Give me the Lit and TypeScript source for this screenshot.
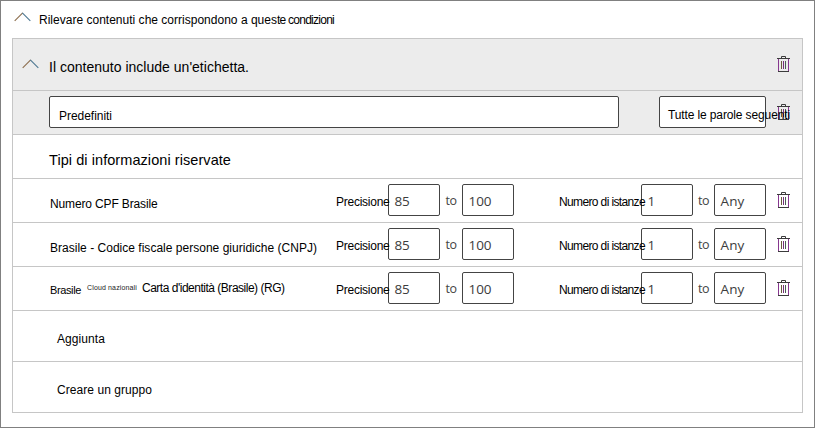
import { LitElement, html, css, svg } from "lit";
import { customElement, property } from "lit/decorators.js";

/** Text spread over a fixed width by adjusting its letter spacing. */
@customElement("fit-text")
class FitText extends LitElement {
  @property() text = "";
  @property({ type: Number }) width = 0;

  static styles = css`
    :host { display: inline-block; white-space: pre; flex: none; }
    span { display: inline-block; }
  `;

  firstUpdated() {
    const span = this.renderRoot.querySelector("span")!;
    const natural = span.getBoundingClientRect().width;
    const gap = (this.width - natural) / this.text.length;
    span.style.letterSpacing = `${gap}px`;
  }

  render() {
    return html`<span>${this.text}</span>`;
  }
}

const fit = (text: string, width: number, cls = "") =>
  html`<fit-text class=${cls} .text=${text} .width=${width}></fit-text>`;

const trash = html`<svg class="trash" width="14" height="17" viewBox="0 0 14 17" fill="none">
  ${svg`<path d="M1.5 2.5V15.5" stroke="#86378f"/><path d="M11.5 2.5V15.5" stroke="#86378f"/>
  <path d="M0 2.5H13M1 15.5H12M4.5 2V.5H8.5V2" stroke="#3b3b3b"/>
  <path d="M4.5 5V13" stroke="#6b5a3c"/><path d="M6.5 5V13" stroke="#76307c"/><path d="M8.5 5V13" stroke="#4a5f55"/>`}
</svg>`;

const chevron = html`<svg class="chevron" width="18" height="10" viewBox="0 0 18 10" fill="none">
  <path d="M.7 8.8L8.7 .8" stroke="#8a6b4a" stroke-width="1.1"/><path d="M8.3 .8L16.3 8.8" stroke="#4a7590" stroke-width="1.1"/>
</svg>`;

@customElement("app-root")
class AppRoot extends LitElement {
  static styles = css`
    * { box-sizing: border-box; }
    :host {
      display: block; box-sizing: border-box; width: 815px; height: 428px;
      border: 1px solid #808080; background: #fff; color: #000; overflow: hidden;
      font: 12px/16px "Liberation Sans", Arial, sans-serif;
    }
    svg { display: block; flex: none; }
    .top { display: flex; height: 37px; padding: 11px 0 0 13px; }
    .top .title { margin: 0 0 0 7px; }
    .panel { margin-left: 11px; width: 791px; border: 1px solid #c6c6c6; }
    .row { display: flex; align-items: flex-start; height: 44px; border-bottom: 1px solid #c6c6c6; padding-left: 36px; }
    .shade { background: #ececec; }
    .head { height: 52px; padding-left: 9px; }
    .head .chevron { margin-top: 20px; }
    .head .title { margin: 18px 0 0 9px; font-size: 14px; line-height: 20px; }
    .trash { margin: 13px 11px 0 auto; }
    .head .trash { margin-top: 17px; }
    .box { flex: none; height: 32px; margin-top: 5px; border: 1px solid #444; border-radius: 2px; background: #fff; }
    .wide { width: 570px; padding: 11px 0 0 9px; }
    .select { width: 107px; margin-left: 40px; padding: 10px 0 0 8px; white-space: nowrap; position: relative; z-index: 1; }
    .section { margin-top: 15px; font-size: 14.5px; line-height: 20px; }
    .name { display: flex; align-items: flex-start; width: 287px; padding: 17px 0 0 1px; }
    .brand { font-size: 11px; margin-top: -2px; }
    .tiny { font-size: 7px; line-height: 10px; margin: -1px 0 0 6px; color: #222; }
    .long { margin-left: 5px; margin-top: -4px; }
    .label { width: 52px; padding-top: 15px; white-space: nowrap; position: relative; z-index: 1; }
    .count { width: 82px; margin-left: 45px; }
    .num { width: 52px; padding: 8px 0 0 5.5px; color: #3c3c3c; font: 13.5px/16px "Open Sans", "Noto Sans", sans-serif; }
    .to { width: 22px; padding: 14px 0 0 5.5px; color: #444; font: 12.5px/16px "Open Sans", "Noto Sans", sans-serif; }
    .to.late { width: 21px; padding-left: 5px; }
    .action { height: 51px; padding: 20px 0 0 44px; }
    .action:last-child { height: 50px; border-bottom: 0; }
  `;

  private names = [
    html`${fit("Numero CPF Brasile", 107.5)}`,
    html`${fit("Brasile - Codice fiscale persone giuridiche (CNPJ)", 267)}`,
    html`${fit("Brasile", 31, "brand")}${fit("Cloud nazionali", 50, "tiny")}${fit("Carta d'identità (Brasile) (RG)", 142.5, "long")}`,
  ];

  render() {
    return html`
      <div class="top">${chevron}
        <div class="title">${fit("Rilevare contenuti che corrispondono a ques", 238)}${fit("te ", 11)}${fit("condizioni", 46)}</div>
      </div>
      <div class="panel">
        <div class="row shade head">${chevron}<div class="title">${fit("Il contenuto include un'etichetta.", 200)}</div>${trash}</div>
        <div class="row shade filter">
          <div class="box wide">${fit("Predefiniti", 53)}</div>
          <div class="box select">${fit("Tutte le parole seguenti", 122)}</div>
          ${trash}
        </div>
        <div class="row"><div class="section">${fit("Tipi di informazioni riservate", 182)}</div></div>
        ${this.names.map((name) => html`
          <div class="row">
            <div class="name">${name}</div>
            <div class="label">${fit("Precisione", 53.5)}</div>
            <div class="box num">${fit("85", 15)}</div>
            <div class="to">${fit("to", 11)}</div>
            <div class="box num">${fit("100", 23)}</div>
            <div class="label count">${fit("Numero di istanze", 86)}</div>
            <div class="box num">${fit("1", 7.5)}</div>
            <div class="to late">${fit("to", 11)}</div>
            <div class="box num">${fit("Any", 24)}</div>
            ${trash}
          </div>`)}
        <div class="row action">${fit("Aggiunta", 48)}</div>
        <div class="row action">${fit("Creare un gruppo", 95)}</div>
      </div>
    `;
  }
}
